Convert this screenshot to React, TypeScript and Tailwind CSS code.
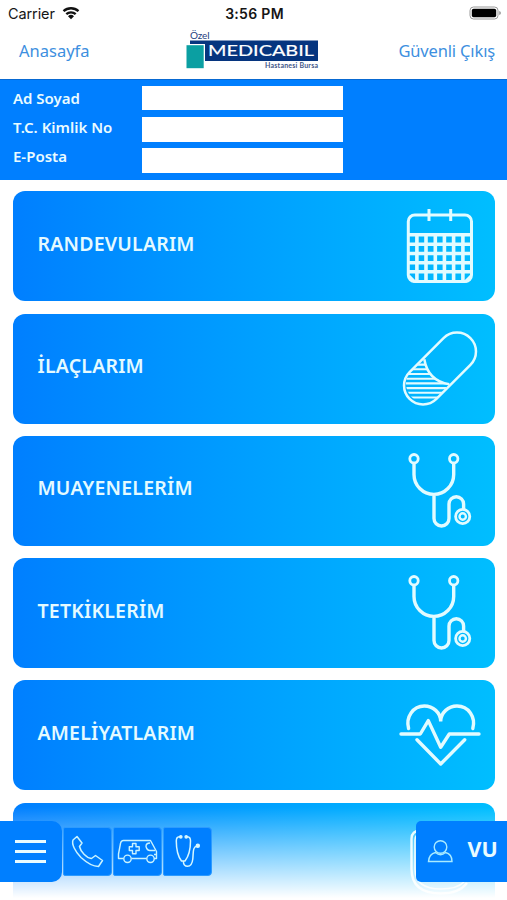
import type { ReactNode } from "react";

// ========================================
// Card icons (108x110, flush with the right edge of a card)
// ========================================
function CardIcon({ children }: { children: ReactNode }) {
  return (
    <svg
      viewBox="0 0 108 110"
      className="h-[110px] w-[108px] shrink-0"
      fill="none"
      stroke="#e2fbff"
      strokeWidth="3"
    >
      {children}
    </svg>
  );
}

function CalendarIcon() {
  return (
    <CardIcon>
      <rect x="21.3" y="24" width="63.2" height="66.5" rx="6.5" />
      <path
        strokeWidth="3.6"
        d="M21 43.8h64M21 53.2h64M21 62.5h64M21 71.8h64M21 80.8h64M29.9 43v47M39 43v47M48.3 43v47M57.4 43v47M66.6 43v47M75.9 43v47"
      />
      <path d="M22 85l6 6M84 85l-6 6" />
      <path d="M42 18v12M63.7 18v12" />
    </CardIcon>
  );
}

function PillIcon() {
  return (
    <CardIcon>
      <clipPath id="pill-half">
        <path d="M37.3 45.3Q41 67 62.3 70.3L49 85A19 19 0 0 1 22.5 58.5Z" />
      </clipPath>
      <rect
        x="10"
        y="35.5"
        width="86"
        height="38"
        rx="19"
        strokeWidth="2.5"
        transform="rotate(-45 53 54.5)"
      />
      <path strokeWidth="2.5" d="M37.3 45.3Q41 67 62.3 70.3" />
      <path
        clipPath="url(#pill-half)"
        strokeWidth="2.1"
        d="M15 50.6h50M15 55.3h50M15 60h50M15 64.7h50M15 69.4h50M15 74.1h50M15 78.8h50M15 83.5h50"
      />
    </CardIcon>
  );
}

function StethoscopeIcon() {
  return (
    <CardIcon>
      <circle cx="27" cy="22.7" r="4.2" strokeWidth="2.8" />
      <circle cx="66.7" cy="22.7" r="4.2" strokeWidth="2.8" />
      <path
        strokeWidth="3.4"
        d="M27 27v11.5a19.85 19.85 0 0 0 39.7 0V27M47 58v24.5a7.5 7.5 0 0 0 15 0V68a7.3 7.3 0 0 1 14.6 0v5.5"
      />
      <circle cx="75.7" cy="80.5" r="7.1" strokeWidth="2.8" />
      <circle cx="75.7" cy="80.5" r="3.2" strokeWidth="2.4" />
    </CardIcon>
  );
}

function HeartIcon() {
  return (
    <CardIcon>
      <path
        strokeWidth="3.4"
        strokeLinecap="round"
        d="M21.6 48.5C18.5 37 26 26 37.3 26C46 26 53.7 32.5 53.7 41.5C53.7 32.5 61.5 26 70 26C81.5 26 89 37 85.8 48.5"
      />
      <path
        strokeWidth="3.4"
        strokeLinecap="round"
        strokeLinejoin="round"
        d="M14 54h19.3L41.3 40.6L53.7 67.2L62.3 54H92M30 59.7L53.7 84L77.7 59.7"
      />
    </CardIcon>
  );
}

function ReportIcon() {
  return (
    <CardIcon>
      <path strokeWidth="2.4" d="M34 27.500Q24.500 27.500 24.500 36V66Q24.500 90.500 54 90.500Q72 90.500 80 80" />
      <path strokeWidth="1.600" d="M34 31Q28 31 28 37V66Q28 86 54 86Q70 86 77 79" />
    </CardIcon>
  );
}

// ========================================
// Header
// ========================================
function StatusBar() {
  return (
    <div className="flex h-7 items-start justify-between pt-[4.5px] pr-[6px] pl-2 font-['Inter',sans-serif] text-[14.5px] leading-[18px] text-[#161616]">
      <div className="flex w-[180px] gap-[7px]">
        <span className="tracking-[-0.1px]">Carrier</span>
        <svg viewBox="0 0 18 14" className="mt-[1px] h-[14px] w-[18px]" fill="none" stroke="#111">
          <path strokeWidth="2.3" d="M1.5 5.2a11 11 0 0 1 15 0M4.3 8.2a6.8 6.8 0 0 1 9.4 0" />
          <path fill="#111" stroke="none" d="M9 13.3L6 10.3a4.3 4.3 0 0 1 6 0z" />
        </svg>
      </div>
      <span className="text-[14px] font-semibold tracking-[0.3px]">3:56 PM</span>
      <div className="flex w-[180px] justify-end">
        <svg viewBox="0 0 32 14" className="mt-[1px] h-[14px] w-8">
          <rect x="1" y="1" width="28" height="12" rx="3.5" fill="#fff" stroke="#999" />
          <rect x="2.8" y="2.8" width="24.4" height="8.4" rx="1.8" fill="#000" />
          <path d="M30.3 5v4q1.5-.5 1.5-2t-1.5-2" fill="#888" />
        </svg>
      </div>
    </div>
  );
}

function Logo() {
  return (
    <svg viewBox="0 0 134 42" className="mr-[10px] h-[42px] w-[134px]">
      <text x="5" y="10.5" fontSize="10" fontFamily="Lato, sans-serif" fill="#26417f" textLength="19.5">
        Özel
      </text>
      <rect x="5" y="12.5" width="128" height="20.5" fill="#06357f" />
      <rect x="0.5" y="16" width="19.5" height="25" fill="#fff" />
      <rect x="1.5" y="17.2" width="17.2" height="23" fill="#0b9fa2" />
      <text
        x="23"
        y="28.3"
        fontSize="15.5"
        fontFamily="Lato, sans-serif"
        fontWeight="400"
        fill="#fff"
        stroke="#fff"
        strokeWidth="0.2"
        textLength="106"
        lengthAdjust="spacingAndGlyphs"
      >
        MEDICABIL
      </text>
      <text
        x="80"
        y="40.2"
        fontSize="7"
        fontFamily="Lato, sans-serif"
        fontWeight="700"
        fill="#3f5689"
        textLength="53"
      >
        Hastanesi Bursa
      </text>
    </svg>
  );
}

const fields = ["Ad Soyad", "T.C. Kimlik No", "E-Posta"];

function UserInfo() {
  return (
    <div className="flex h-[100.5px] border-t border-[#0869d2] bg-[#007fff] pl-[13px]">
      <div className="flex w-[129px] flex-col pt-[3.5px]">
        {fields.map((f) => (
          <span
            key={f}
            className="h-[29.3px] text-[15px] leading-[29.3px] font-semibold whitespace-nowrap text-[#e9fbff]"
          >
            {f}
          </span>
        ))}
      </div>
      <div className="flex flex-col gap-[6.5px] pt-[5.5px]">
        {fields.map((f) => (
          <div key={f} className="h-[24.8px] w-[201px] bg-white" />
        ))}
      </div>
    </div>
  );
}

// ========================================
// Menu
// ========================================
const menu = [
  { label: "RANDEVULARIM", icon: <CalendarIcon /> },
  { label: "İLAÇLARIM", icon: <PillIcon /> },
  { label: "MUAYENELERİM", icon: <StethoscopeIcon /> },
  { label: "TETKİKLERİM", icon: <StethoscopeIcon /> },
  { label: "AMELİYATLARIM", icon: <HeartIcon /> },
  { label: "", icon: <ReportIcon /> },
];

function BottomBar() {
  const tile =
    "flex h-[49px] w-[49px] items-center justify-center rounded-r-[4px] rounded-l-[2px] border border-[#2d9bff] bg-[#007fff]";
  return (
    <div className="absolute inset-x-0 bottom-0 flex h-[98px] items-start justify-between bg-linear-to-b from-white/0 from-5% to-white to-98% pt-[19px]">
      <div className="flex items-center gap-[1.3px]">
        <button className="flex h-[61px] w-[61.5px] flex-col justify-center gap-[6.6px] rounded-r-[10px] bg-[#007fff] pl-[15px]">
          <span className="h-[3.6px] w-[31px] bg-[#e9fbff]" />
          <span className="h-[3.6px] w-[31px] bg-[#e9fbff]" />
          <span className="h-[3.6px] w-[31px] bg-[#e9fbff]" />
        </button>
        <button className={tile}>
          <svg viewBox="0 0 49 49" className="h-[49px] w-[49px] shrink-0" fill="none" stroke="#c9f3ff" strokeWidth="1.5" strokeLinejoin="round">
            <path d="M14 9.5L10 13C8.5 17 12 24.5 18 30.5C23.5 35.5 29.5 39.5 35.5 39.5L39.5 33.5L32.5 28.5L28.5 31.5C23.5 31 17.5 24.5 16.5 19.5L19 16Z" />
          </svg>
        </button>
        <button className={tile}>
          <svg viewBox="0 0 49 49" className="h-[49px] w-[49px] shrink-0" fill="none" stroke="#c9f3ff" strokeWidth="1.4" strokeLinejoin="round">
            <path d="M10.5 31.5H5.5V27L7.5 16.5Q8 13.5 10.5 13.5H37.5L43.5 24.5V31.5H41M18.5 31.5H33.5" />
            <circle cx="14.5" cy="31.8" r="3.7" />
            <circle cx="37.5" cy="31.8" r="3.7" />
            <path d="M19.5 16.5h3.5v3.2h3.2v3.8H23v3.2h-3.5v-3.2h-3.2v-3.8h3.2zM37 16Q33 16 33 19.5Q34 23.5 37 23.5H42M41 27.5h2.5" />
          </svg>
        </button>
        <button className={tile}>
          <svg viewBox="0 0 49 49" className="h-[49px] w-[49px] shrink-0" fill="none" stroke="#d6f7ff" strokeWidth="1.5">
            <path d="M17.5 9.8h-1.3Q13.3 10 13.3 14C13.3 23 15 29.5 18.5 34H22C25.5 29.5 27.5 22 27.5 14Q27.5 10 24.5 9.8h-1.3M20.3 34Q20.5 39.3 24.5 39.3Q29 39.3 29.8 32C30.5 25 29.5 20 34 19" />
            <circle cx="17.8" cy="9.8" r="1.1" fill="#d6f7ff" />
            <circle cx="23.2" cy="9.8" r="1.1" fill="#d6f7ff" />
            <circle cx="34.8" cy="18.7" r="1.5" fill="#d6f7ff" />
          </svg>
        </button>
      </div>
      <button className="flex h-[61px] w-[91.5px] items-center rounded-l-[5px] bg-[#007fff] pl-[11px]">
        <svg viewBox="0 0 27 25" className="h-[25px] w-[27px]" fill="none" stroke="#a9ebff" strokeWidth="1.4">
          <circle cx="13.5" cy="8" r="6.3" />
          <path d="M8.5 13.5Q2 15 1.5 22.5H25Q25 15 18.5 13.5Q13.5 18 8.5 13.5Z" />
        </svg>
        <span className="mb-[6px] ml-[14px] text-[21.5px] leading-[28px] font-bold text-[#e9fbff]">VU</span>
      </button>
    </div>
  );
}

export default function App() {
  return (
    <div className="relative h-[900px] w-[507px] overflow-hidden bg-white font-['Noto_Sans',sans-serif]">
      <StatusBar />
      <div className="flex h-[51px] items-start justify-between pr-[12px] pl-[19px] text-[16.5px] text-[#3d8fe0]">
        <span className="w-[166px] pt-[11px] leading-6">Anasayfa</span>
        <Logo />
        <span className="flex w-[166px] justify-end pt-[11px] leading-6 tracking-[-0.15px] whitespace-nowrap">
          Güvenli Çıkış
        </span>
      </div>
      <UserInfo />
      <div className="flex flex-col gap-[12.3px] pt-[11.8px] pr-[12.5px] pl-[13px]">
        {menu.map((item, i) => (
          <div
            key={i}
            className="flex h-[110px] items-center justify-between rounded-[12px] bg-linear-to-r from-[#007fff] to-[#00beff] pl-[24.5px]"
          >
            <span className="mb-[5px] text-[19.5px] leading-7 font-semibold tracking-[0.2px] text-[#e4faff]">
              {item.label}
            </span>
            {item.icon}
          </div>
        ))}
      </div>
      <BottomBar />
    </div>
  );
}
